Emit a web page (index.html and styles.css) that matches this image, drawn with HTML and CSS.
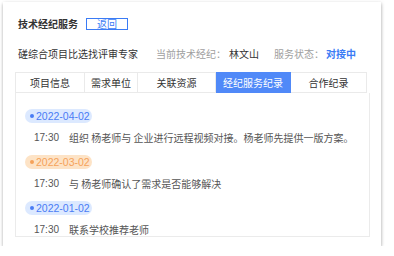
FILE: index.html
```html
<!DOCTYPE html>
<html lang="zh-CN">
<head>
    <meta charset="UTF-8">
    <title>技术经纪服务</title>
    <link rel="stylesheet" href="styles.css">
</head>
<body>
    <div class="card">
        <!-- Header -->
        <div class="head">
            <span class="title">技术经纪服务</span>
            <span class="back-btn">返回</span>
        </div>

        <!-- Project info row -->
        <div class="info">
            <span class="project">磋综合项目比选找评审专家</span>
            <span class="label label-first">当前技术经纪：</span>
            <span class="value">林文山</span>
            <span class="label label-second">服务状态：</span>
            <span class="status">对接中</span>
        </div>

        <!-- Tabs -->
        <div class="tabs">
            <div class="tab tab-1">项目信息</div>
            <div class="tab tab-2">需求单位</div>
            <div class="tab tab-3">关联资源</div>
            <div class="tab tab-4 active">经纪服务纪录</div>
            <div class="tab tab-5">合作纪录</div>
        </div>

        <!-- Service records -->
        <div class="records">
            <div class="record">
                <div class="date blue"><i class="dot"></i>2022-04-02</div>
                <div class="row"><span class="time">17:30</span><span class="text">组织 杨老师与 企业进行远程视频对接。杨老师先提供一版方案。</span></div>
            </div>
            <div class="record">
                <div class="date orange"><i class="dot"></i>2022-03-02</div>
                <div class="row"><span class="time">17:30</span><span class="text">与 杨老师确认了需求是否能够解决</span></div>
            </div>
            <div class="record">
                <div class="date blue"><i class="dot"></i>2022-01-02</div>
                <div class="row"><span class="time">17:30</span><span class="text">联系学校推荐老师</span></div>
            </div>
        </div>
    </div>
</body>
</html>
```

FILE: styles.css
```css
/* General Reset */
* {
    margin: 0;
    padding: 0;
    box-sizing: border-box;
    font-family: "Noto Sans CJK SC", "Liberation Sans", sans-serif;
}

body {
    background-color: #FFFFFF;
    font-size: 10px;
    color: #333333;
}

/* Card */
.card {
    margin: 2px 0 0 3px;
    width: 378px;
    height: 244px;
    padding: 14px 11px 0 12px;
    background-color: #FFFFFF;
    box-shadow: 0 2px 3px rgba(0, 0, 0, 0.3), 1px 0 4px rgba(0, 0, 0, 0.08);
}

/* Header */
.head {
    display: flex;
    align-items: center;
    height: 16px;
    padding-left: 3px;
}

.title {
    font-weight: bold;
    line-height: 16px;
}

.back-btn {
    margin-left: 8px;
    width: 42px;
    height: 12px;
    border: 1px solid #3A7BF5;
    color: #3A7BF5;
    line-height: 10px;
    text-align: center;
}

/* Info row */
.info {
    display: flex;
    align-items: center;
    height: 16px;
    margin-top: 14px;
    padding-left: 3px;
    line-height: 16px;
}

.label {
    color: #A0A0A0;
}

.label-first {
    margin-left: 18px;
}

.label-second {
    margin-left: 15px;
}

.value {
    margin-left: 3px;
}

.status {
    margin-left: 2px;
    color: #3A7BF5;
    font-weight: bold;
}

/* Tabs */
.tabs {
    display: flex;
    margin-top: 10px;
    height: 21px;
}

.tab {
    height: 21px;
    border: 1px solid #EAEAEA;
    border-left: none;
    line-height: 19px;
    text-align: center;
    color: #333333;
}

.tab-1 { width: 70px; border-left: 1px solid #EAEAEA; }
.tab-2 { width: 53px; }
.tab-3 { width: 78px; }
.tab-4 { width: 75px; }
.tab-5 { width: 76px; }

.tab.active {
    background-color: #5089F8;
    border-color: #5089F8;
    color: #FFFFFF;
}

/* Records */
.records {
    width: 355px;
    height: 144px;
    border: 1px solid #EBEBEB;
    border-top: none;
    padding: 13px 0 0 9px;
}

.record {
    margin-bottom: 6px;
}

.date {
    display: inline-flex;
    align-items: center;
    height: 14px;
    width: 67px;
    padding-left: 5px;
    border-radius: 7px;
    font-family: "Liberation Sans", sans-serif;
    font-size: 10.5px;
}

.date .dot {
    width: 4px;
    height: 4px;
    border-radius: 50%;
    margin-right: 2px;
}

.date.blue {
    background-color: #DCE9FF;
    color: #4A7CF5;
}

.date.blue .dot {
    background-color: #4A7CF5;
}

.date.orange {
    background-color: #FDE3C6;
    color: #F5A25A;
}

.date.orange .dot {
    background-color: #F5A25A;
}

.row {
    display: flex;
    margin-top: 7px;
    height: 16px;
    line-height: 16px;
    padding-left: 9px;
    color: #555555;
}

.time {
    width: 35px;
    font-family: "Liberation Sans", sans-serif;
}
```
